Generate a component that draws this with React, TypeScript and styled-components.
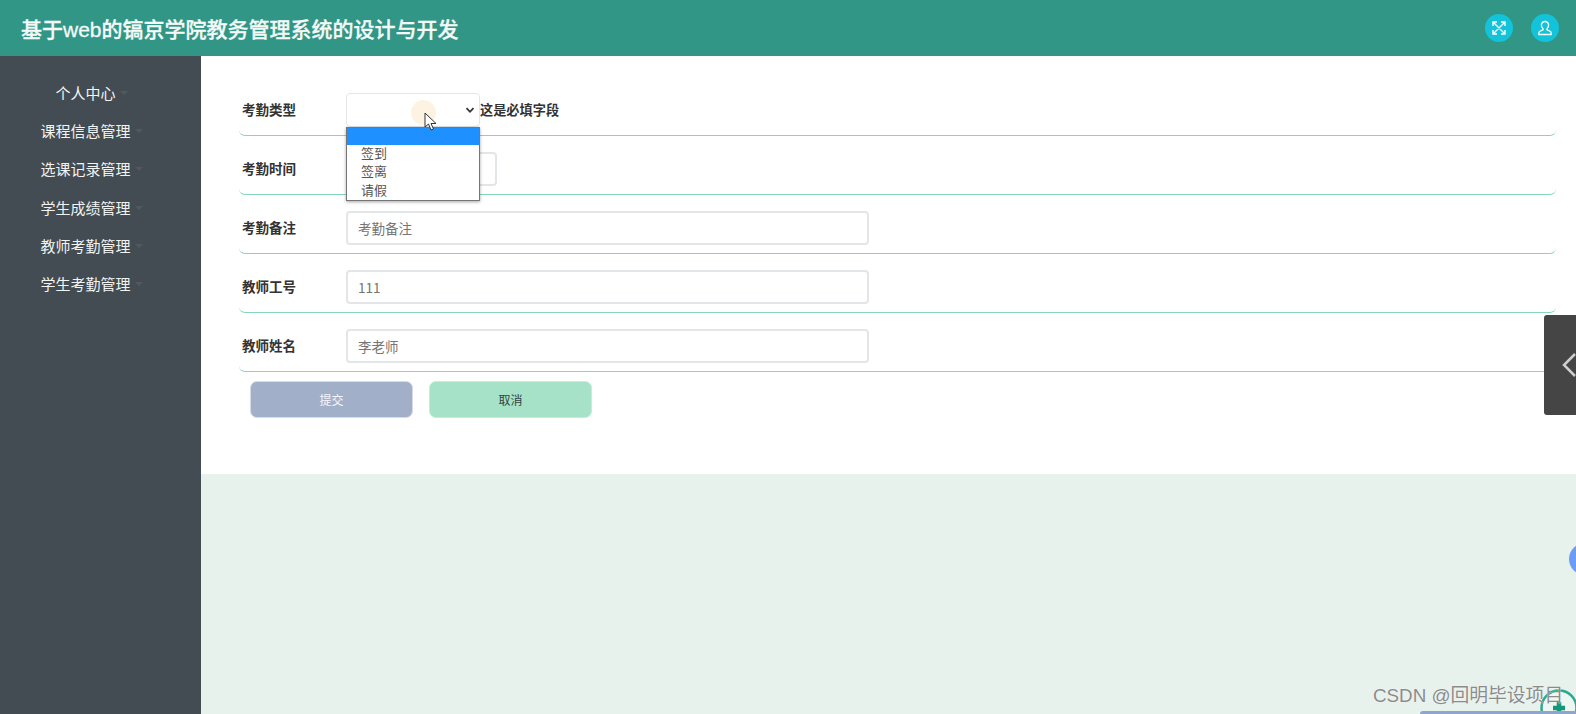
import React from "react";
import styled, { createGlobalStyle } from "styled-components";

const Global = createGlobalStyle`
  html, body { margin: 0; padding: 0; height: 100%; overflow: hidden; background: #e8f2ed; }
  body { font-family: "Noto Sans CJK SC", "Liberation Sans", sans-serif; }
  * { box-sizing: border-box; }
`;

const Page = styled.div`
  position: relative;
  width: 1576px;
  height: 714px;
  overflow: hidden;
  background: #e8f2ed;
`;

const Header = styled.header`
  height: 56px;
  background: #319686;
  display: flex;
  align-items: center;
  justify-content: space-between;
  padding: 0 17px 0 21px;
`;

const Title = styled.h1`
  margin: 0;
  color: #f4faf8;
  font-size: 21px;
  font-weight: 500;
  font-family: "Liberation Sans", "Noto Sans CJK SC", sans-serif;
  -webkit-text-stroke: 0.3px #f4faf8;
`;

const HeaderActions = styled.div`
  display: flex;
  gap: 18px;
`;

const RoundIcon = styled.span`
  width: 28px;
  height: 28px;
  border-radius: 50%;
  background: #12c3d9;
  color: #fff;
  display: flex;
  align-items: center;
  justify-content: center;
`;

const Body = styled.div`
  display: flex;
  height: 658px;
`;

const Sidebar = styled.nav`
  width: 201px;
  flex: none;
  background: #434c52;
  padding-top: 17px;
`;

const NavItem = styled.div`
  height: 38.3px;
  display: flex;
  align-items: center;
  justify-content: center;
  padding-right: 30px;
  color: #f2f4f4;
  font-size: 15px;
`;

const NavLabel = styled.span`
  position: relative;
`;

const NavCaret = styled.i`
  position: absolute;
  left: 100%;
  top: 9px;
  margin-left: 4px;
  width: 0;
  height: 0;
  border: 4px solid transparent;
  border-top-color: #4f595f;
`;

const Content = styled.main`
  flex: 1;
  min-width: 0;
`;

const Panel = styled.section`
  height: 418px;
  background: #fff;
  padding: 21px 20px 0 38px;
`;

const Row = styled.div`
  height: 59px;
  display: flex;
  align-items: center;
  border-bottom: 1px solid #86d5bd;
  border-radius: 0 0 6px 6px;
  padding-top: 8px;
  position: relative;
`;

const Label = styled.label`
  width: 107px;
  flex: none;
  padding: 0 0 2px 3px;
  color: #333;
  font-size: 13.5px;
  font-weight: 700;
`;

const Field = styled.div<{ $w: number }>`
  width: ${(p) => p.$w}px;
  height: 34px;
  border: 2px solid #e3e6e8;
  border-radius: 4px;
  padding: 0 10px;
  display: flex;
  align-items: center;
  font-size: 13.5px;
  color: #757575;
  background: #fff;
  flex: none;
`;

const SelectBox = styled(Field)`
  border-width: 1px;
  justify-content: flex-end;
  padding: 0 4px 0 0;
  color: #333;
`;

const Required = styled.span`
  color: #333;
  font-size: 13.2px;
  font-weight: 700;
  padding-bottom: 2px;
`;

const Dropdown = styled.ul`
  position: absolute;
  left: 107px;
  top: 50px;
  z-index: 3;
  width: 134px;
  height: 74px;
  margin: 0;
  padding: 0;
  list-style: none;
  background: #fff;
  border: 1px solid #767676;
  box-shadow: 0 1px 3px rgba(0, 0, 0, 0.35);
`;

const Option = styled.li<{ $active?: boolean }>`
  height: ${(p) => (p.$active ? 17 : 18.3)}px;
  line-height: 16px;
  padding-left: 14px;
  font-size: 13px;
  color: #555;
  background: ${(p) => (p.$active ? "#1e90ff" : "transparent")};
`;

const Halo = styled.i`
  position: absolute;
  left: 411px;
  top: 100px;
  z-index: 4;
  width: 25px;
  height: 25px;
  border-radius: 50%;
  background: #fdf3e3;
`;

const Cursor = styled.svg`
  position: absolute;
  left: 424px;
  top: 112px;
  z-index: 5;
`;

const Buttons = styled.div`
  display: flex;
  gap: 16px;
  padding: 9px 0 0 11px;
`;

const Btn = styled.button<{ $bg: string; $fg: string; $edge: string }>`
  width: 163px;
  height: 37px;
  border: 1px solid ${(p) => p.$edge};
  border-radius: 7px;
  background: ${(p) => p.$bg};
  color: ${(p) => p.$fg};
  font-family: inherit;
  font-size: 12px;
  padding: 0 0 1px 0;
`;

const SideTab = styled.div`
  position: absolute;
  right: 0;
  top: 315px;
  width: 32px;
  height: 100px;
  background: #454545;
  border-radius: 3px 0 0 3px;
  display: flex;
  align-items: center;
  justify-content: flex-end;
  color: #cfcfcf;
`;

const BlueDot = styled.i`
  position: absolute;
  left: 1569px;
  top: 543px;
  width: 32px;
  height: 32px;
  border-radius: 50%;
  background: #6b9cf7;
`;

const GreenRing = styled.svg`
  position: absolute;
  left: 1539px;
  top: 688px;
`;

const BottomBar = styled.i`
  position: absolute;
  left: 1420px;
  top: 711px;
  width: 156px;
  height: 3px;
  background: #8ea6cc;
  border-radius: 3px 0 0 0;
`;

const Watermark = styled.span`
  position: absolute;
  left: 1373px;
  top: 684px;
  font-family: "Liberation Sans", "Noto Sans CJK SC", sans-serif;
  font-size: 18.8px;
  line-height: 24px;
  color: #8b8b8b;
  text-shadow: 0 0 1px #fff;
  white-space: nowrap;
`;

const nav = ["个人中心", "课程信息管理", "选课记录管理", "学生成绩管理", "教师考勤管理", "学生考勤管理"];

export default function App() {
  return (
    <Page>
      <Global />
      <Header>
        <Title>基于web的镐京学院教务管理系统的设计与开发</Title>
        <HeaderActions>
          <RoundIcon>
            <svg width="14" height="14" viewBox="0 0 14 14" fill="none" stroke="currentColor" strokeWidth="1.4">
              <path d="M2 2 12 12M12 2 2 12M1 5V1h4M9 1h4v4M13 9v4H9M5 13H1V9" />
            </svg>
          </RoundIcon>
          <RoundIcon>
            <svg width="16" height="16" viewBox="0 0 16 16" fill="none" stroke="currentColor" strokeWidth="1.3">
              <path d="M8 1.500a3.600 3.600 0 0 0-3.600 3.600c0 1.700.8 2.900 1.600 3.700v1L2.500 11.500c-.4.200-.6.500-.6 1V14.500h12.200V12.500c0-.5-.2-.8-.6-1L10 9.800v-1c.8-.8 1.600-2 1.600-3.700A3.600 3.600 0 0 0 8 1.500Z" />
            </svg>
          </RoundIcon>
        </HeaderActions>
      </Header>
      <Body>
        <Sidebar>
          {nav.map((n) => (
            <NavItem key={n}>
              <NavLabel>
                {n}
                <NavCaret />
              </NavLabel>
            </NavItem>
          ))}
        </Sidebar>
        <Content>
          <Panel>
            <Row>
              <Label>考勤类型</Label>
              <SelectBox $w={134}>
                <svg width="10" height="10" viewBox="0 0 10 10" fill="none" stroke="currentColor" strokeWidth="1.8">
                  <path d="M1.500 3.200 5 6.800l3.500-3.600" />
                </svg>
              </SelectBox>
              <Required>这是必填字段</Required>
              <Dropdown>
                <Option $active />
                <Option>签到</Option>
                <Option>签离</Option>
                <Option>请假</Option>
              </Dropdown>
            </Row>
            <Row>
              <Label>考勤时间</Label>
              <Field $w={151} />
            </Row>
            <Row>
              <Label>考勤备注</Label>
              <Field $w={523}>考勤备注</Field>
            </Row>
            <Row>
              <Label>教师工号</Label>
              <Field $w={523}>111</Field>
            </Row>
            <Row>
              <Label>教师姓名</Label>
              <Field $w={523}>李老师</Field>
            </Row>
            <Buttons>
              <Btn $bg="#a2afc9" $fg="#f4f6fa" $edge="#d5dbe8">提交</Btn>
              <Btn $bg="#a6e2c8" $fg="#33433c" $edge="#c4eddb">取消</Btn>
            </Buttons>
          </Panel>
        </Content>
      </Body>
      <Halo />
      <Cursor width="13" height="19" viewBox="0 0 13 19">
        <path d="M1 1v14l3.500-3 2.500 6 2.500-1-2.500-5.500H12Z" fill="#fff" stroke="#333" strokeWidth="1" />
      </Cursor>
      <SideTab>
        <svg width="14" height="26" viewBox="0 0 14 26" fill="none" stroke="currentColor" strokeWidth="2.500">
          <path d="M13 2 2 13l11 11" />
        </svg>
      </SideTab>
      <BlueDot />
      <GreenRing width="40" height="26" viewBox="0 0 40 26">
        <circle cx="20" cy="20" r="17.500" fill="#eef6f2" stroke="#2fa98d" strokeWidth="2.500" />
        <path d="M20 14v12M14 20h12" stroke="#16977a" strokeWidth="4.500" />
      </GreenRing>
      <Watermark>CSDN @回明毕设项目</Watermark>
      <BottomBar />
    </Page>
  );
}
